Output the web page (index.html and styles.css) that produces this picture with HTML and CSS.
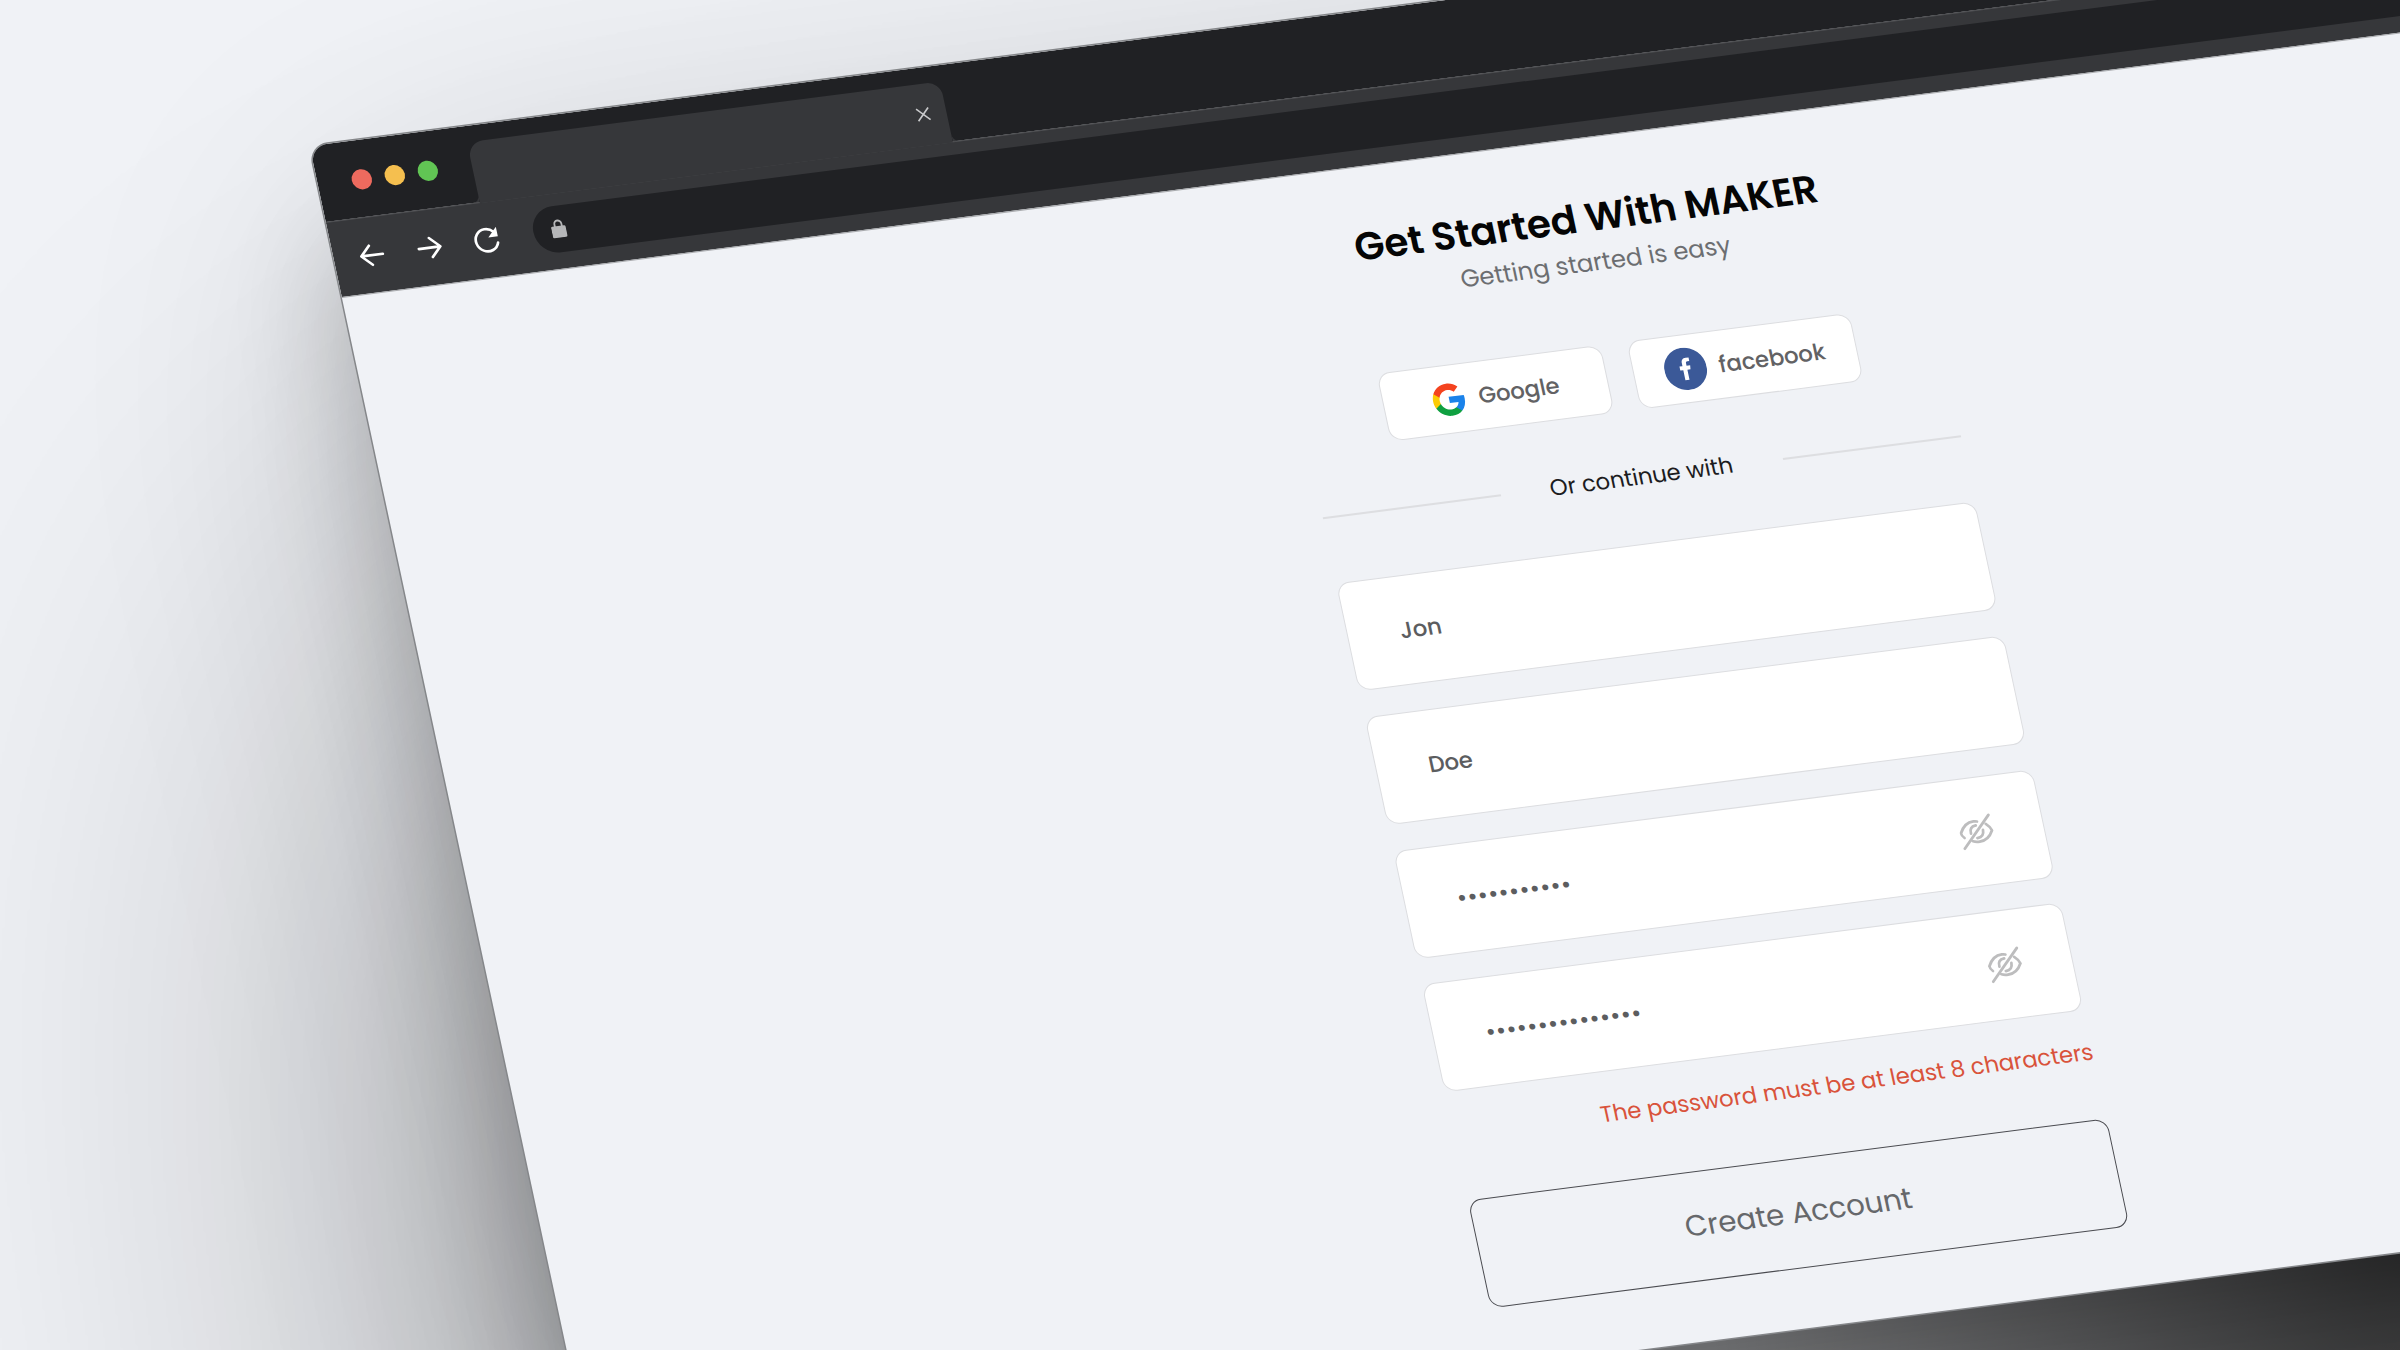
FILE: index.html
```html
<!DOCTYPE html>
<html lang="en">
<head>
<meta charset="utf-8">
<title>Get Started With MAKER</title>
<link rel="stylesheet" href="styles.css">
</head>
<body>
<div class="stage">
  <svg class="shadow" viewBox="0 0 2400 1350">
    <defs>
      <filter id="wide" filterUnits="userSpaceOnUse" x="-1200" y="-1200" width="6200" height="4600"><feGaussianBlur stdDeviation="340"/></filter>
      <filter id="mid" filterUnits="userSpaceOnUse" x="-1200" y="-1200" width="6200" height="4600"><feGaussianBlur stdDeviation="150"/></filter>
      <filter id="near" filterUnits="userSpaceOnUse" x="-1200" y="-1200" width="6200" height="4600"><feGaussianBlur stdDeviation="58"/></filter>
      <radialGradient id="corner" gradientUnits="userSpaceOnUse" cx="2420" cy="1220" r="720"><stop offset="0" stop-color="#000" stop-opacity=".68"/><stop offset="1" stop-color="#000" stop-opacity="0"/></radialGradient>
    </defs>
    <path filter="url(#wide)" opacity=".48" d="M428 700 714 2038 3800 1641V267Z"/>
    <path filter="url(#mid)" opacity=".17" d="M333 246 595 1484 3600 1098V-174Z"/>
    <path filter="url(#near)" opacity=".22" d="M333 256 595 1484 3600 1098V-164Z"/>
    <rect x="1500" y="1150" width="900" height="200" fill="url(#corner)"/>
  </svg>
  <div class="window">
    <header class="tabbar">
      <div class="lights"><i class="light red"></i><i class="light yellow"></i><i class="light green"></i></div>
      <div class="tab">
        <svg class="flare left" viewBox="0 0 8 8"><path d="M8 0V8H0Q8 8 8 0Z"/></svg>
        <svg class="close" viewBox="0 0 14 14"><path d="M1 1 13 13M13 1 1 13"/></svg>
        <svg class="flare right" viewBox="0 0 8 8"><path d="M0 0V8H8Q0 8 0 0Z"/></svg>
      </div>
    </header>
    <nav class="toolbar">
      <svg class="nav" viewBox="0 0 26 26"><path d="M24 13H3M12 3.5 2.5 13 12 22.5"/></svg>
      <svg class="nav" viewBox="0 0 26 26"><path d="M2 13H23M14 3.5 23.5 13 14 22.5"/></svg>
      <svg class="nav" viewBox="0 0 26 26"><path d="M23.5 16.5A11 11 0 1 1 21.2 5.5"/><path class="solid" d="M24.500 1V10.500H15Z"/></svg>
      <div class="address">
        <svg class="lock" viewBox="0 0 15 19"><path d="M4 8V5a3.5 3.5 0 0 1 7 0V8"/><rect y="7" width="14.5" height="11.5" rx="1.5"/></svg>
      </div>
    </nav>
    <main class="page">
      <form class="signup">
        <h1 class="title">Get Started With MAKER</h1>
        <p class="subtitle">Getting started is easy</p>
        <div class="social">
          <button type="button" class="provider">
            <svg class="google" viewBox="0 0 48 48"><path fill="#1a82ea" d="M45.1 24.5c0-1.6-.1-3.1-.4-4.5H24v8.5h11.8c-.5 2.8-2.1 5.1-4.4 6.7v5.5h7.1c4.2-3.8 6.6-9.5 6.6-16.2z"/><path fill="#0fa040" d="M24 46c5.9 0 10.9-2 14.5-5.3l-7.1-5.5c-2 1.3-4.5 2.1-7.4 2.1-5.7 0-10.5-3.9-12.3-9.1H4.3v5.7C8 41.1 15.4 46 24 46z"/><path fill="#fccb05" d="M11.7 28.2c-.4-1.3-.7-2.7-.7-4.2s.3-2.9.7-4.2v-5.7H4.3C2.9 17.1 2 20.4 2 24s.9 6.9 2.3 9.9z"/><path fill="#f4431f" d="M24 10.7c3.2 0 6.1 1.1 8.4 3.3l6.3-6.3C34.9 4.2 29.9 2 24 2 15.4 2 8 6.9 4.3 14.1l7.4 5.7c1.8-5.2 6.6-9.1 12.3-9.1z"/></svg>
            <span>Google</span>
          </button>
          <button type="button" class="provider">
            <svg class="facebook" viewBox="0 0 42 42"><circle cx="21" cy="21" r="21"/><path d="M18.500 32V22H15.500V18H18.500V15.200C18.500 11.800 20.300 10.200 23.300 10.200L26.200 10.400V13.700H24.300C22.900 13.700 22.600 14.500 22.600 15.600V18H26.200L25.700 22H22.600V32Z"/></svg>
            <span>facebook</span>
          </button>
        </div>
        <div class="divider"><i class="rule"></i><span class="divider-label">Or continue with</span><i class="rule"></i></div>
        <div class="fields">
          <div class="field">Jon</div>
          <div class="field">Doe</div>
          <div class="field"><span class="mask">•••••••••••</span>
            <svg class="eye" viewBox="0 0 34 34"><path d="M2 32 32 2M4 21.500Q1.500 19 1.500 16.500Q7 6.500 16 6.500Q18 6.500 19.500 7M27.500 10.500Q31 13.500 32.300 17.500Q27 27 18 27Q14 27 11.500 25.800M11.200 18Q10.500 11.200 17.500 10.700M23.600 16Q23.500 22.800 16.500 23.200"/></svg></div>
          <div class="field"><span class="mask">•••••••••••••••</span>
            <svg class="eye" viewBox="0 0 34 34"><path d="M2 32 32 2M4 21.500Q1.500 19 1.500 16.500Q7 6.500 16 6.500Q18 6.500 19.500 7M27.500 10.500Q31 13.500 32.300 17.500Q27 27 18 27Q14 27 11.500 25.800M11.200 18Q10.500 11.200 17.500 10.700M23.600 16Q23.500 22.800 16.500 23.200"/></svg></div>
        </div>
        <p class="error">The password must be at least 8 characters</p>
        <button type="button" class="submit">Create Account</button>
      </form>
    </main>
  </div>
</div>
</body>
</html>
```
FILE: styles.css
```css
* { box-sizing: border-box; }
body { margin: 0; font-family: Poppins, Inter, sans-serif; }
.stage { position: relative; width: 2400px; height: 1350px; overflow: hidden; background: #f0f2f6; }
.shadow { position: absolute; left: 0; top: 0; width: 2400px; height: 1350px; }
.window {
  position: absolute; left: 0; top: 0; width: 2455px; height: 1338px;
  transform-origin: 0 0;
  transform: matrix(1, -0.1285, 0.2136, 1, 309.5, 146);
  overflow: hidden; border-radius: 18px; background: #f0f2f6; box-shadow: 0 0 0 1.5px #85878a;
}

.tabbar { display: flex; height: 76px; background: #202124; }
.lights { display: flex; gap: 13px; padding: 29px 0 0 34px; width: 154px; }
.light { width: 20px; height: 20px; border-radius: 50%; }
.red { background: #ed6a5e; }
.yellow { background: #f5bf4f; }
.green { background: #61c554; }
.tab { position: relative; z-index: 1; width: 473px; height: 61px; margin-top: 16px; border-radius: 16px 14px 0 0; background: #36373a; }
.flare { position: absolute; bottom: 1px; width: 8px; height: 8px; fill: #36373a; }
.flare.left { left: -8px; }
.flare.right { right: -8px; }
.close { position: absolute; right: 16px; top: 23px; width: 14px; height: 14px; fill: none; stroke: #c8c9cb; stroke-width: 1.6; }

.toolbar { display: flex; align-items: center; height: 75px; padding-left: 25px; background: #36373a; border-top: 1px solid #4f5053; }
.nav { width: 26px; height: 26px; margin-right: 31.5px; fill: none; stroke: #fff; stroke-width: 2.6; stroke-linecap: round; stroke-linejoin: round; }
.nav .solid { fill: #fff; stroke: none; }
.address { display: flex; align-items: center; flex: 1; height: 46px; margin: -5px 30px 0 2.5px; padding-left: 18px; border-radius: 23px; background: #202124; }
.lock { width: 15px; height: 19px; fill: #b5b6b8; }
.lock path { fill: none; stroke: #b5b6b8; stroke-width: 1.8; }

.page { display: flex; justify-content: center; height: 1187px; border-top: 1px solid #a9abae; }
.signup { display: flex; flex-direction: column; align-items: center; width: 638px; padding-top: 46px; }
.title { margin: 0; font-size: 38.4px; line-height: 64px; font-weight: 600; color: #050505; white-space: nowrap; }
.subtitle { margin: -6px 0 0; font-size: 24px; line-height: 36px; color: #6c6e71; }
.social { display: flex; gap: 26px; margin-top: 63px; }
.provider { display: flex; align-items: center; justify-content: center; gap: 12px; width: 223.5px; height: 68px; padding: 0; border: 1.5px solid #dcdde0; border-radius: 13px; background: #fff; font: 500 22.4px Poppins, Inter, sans-serif; color: #626264; }
.google { width: 35px; height: 35px; }
.facebook { width: 42px; height: 42px; fill: #3b5998; }
.facebook path { fill: #fff; }
.divider { display: flex; align-items: center; justify-content: space-between; width: 638px; height: 30px; margin-top: 51px; }
.rule { width: 178px; height: 1.5px; background: #dddee1; }
.divider-label { margin-top: -2px; font-size: 22.4px; color: #1c1c1e; }
.fields { display: flex; flex-direction: column; gap: 25.8px; margin-top: 50px; }
.field { display: flex; align-items: center; justify-content: space-between; width: 639px; height: 108px; padding: 0 49px 0 51.5px; border: 1.5px solid #dcdde0; border-radius: 13px; background: #fff; font-size: 22.4px; font-weight: 500; color: #5c5d5f; }
.mask { font-size: 24px; font-weight: 400; letter-spacing: 0.5px; }
.eye { width: 34px; height: 34px; fill: none; stroke: #bdbdbe; stroke-width: 2.7; stroke-linecap: round; }
.error { align-self: flex-end; margin: 23.5px -1px 0 0; font-size: 22.4px; line-height: 34px; color: #d9533b; white-space: nowrap; }
.submit { width: 639px; height: 108px; margin-top: 50px; border: 1.5px solid #4a4b50; border-radius: 13px; background: none; font: 400 28.8px Poppins, Inter, sans-serif; color: #66686b; }
```
